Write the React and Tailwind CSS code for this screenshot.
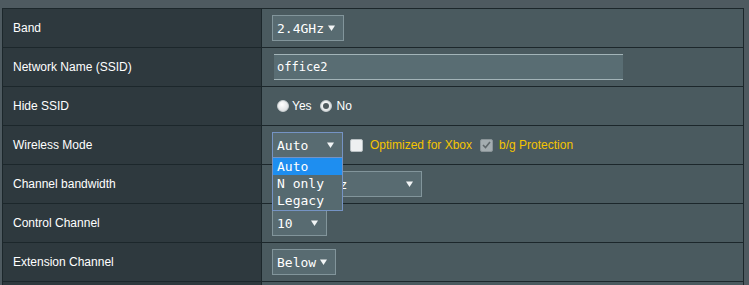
import React from 'react';

const mono = { fontFamily: '"DejaVu Sans Mono", "Liberation Mono", monospace' };

function Arrow() {
    return (
        <svg width="7" height="6" viewBox="0 0 7 6" className="shrink-0">
            <path d="M0 0.5 L7 0.5 L3.5 6 Z" fill="#f2f5f6" />
        </svg>
    );
}

function Select({ value, width, className = '', focused = false }) {
    return (
        <div
            className={`flex h-[26px] items-center justify-between border bg-[#586b71] pl-[4px] pr-[8px] text-[13px] text-white ${focused ? 'border-[#7593c4]' : 'border-[#82959b]'} ${className}`}
            style={{ ...mono, width }}
        >
            <span className="leading-none">{value}</span>
            <Arrow />
        </div>
    );
}

function Radio({ checked }) {
    return (
        <span className="flex h-[12px] w-[12px] items-center justify-center rounded-full border border-[#c9cfd1] bg-[radial-gradient(circle_at_40%_35%,#ffffff,#d4d8da)]">
            {checked && <span className="h-[6px] w-[6px] rounded-full bg-[#4f5a5e]" />}
        </span>
    );
}

function Checkbox({ checked, disabled }) {
    return (
        <span
            className={`flex h-[13px] w-[13px] items-center justify-center rounded-[2px] border ${disabled ? 'border-[#8a9498] bg-[#a4adb0]' : 'border-[#b8c0c3] bg-[#eef0f1]'}`}
        >
            {checked && (
                <svg width="9" height="8" viewBox="0 0 9 8">
                    <path d="M1 4 L3.5 6.5 L8 1" stroke="#5f686b" strokeWidth="1.6" fill="none" />
                </svg>
            )}
        </span>
    );
}

function Row({ label, children, last }) {
    return (
        <div className={`flex h-[39px] border-t border-[#1c272b] ${last ? 'h-[5px]' : ''}`}>
            <div className="flex w-[259px] shrink-0 items-center border-r border-[#1c272b] bg-[#2e393e] pl-[10px] text-[12px] text-white">
                {label}
            </div>
            <div className="relative flex flex-1 items-center bg-[#4a5a5f] pl-[10px]">{children}</div>
        </div>
    );
}

export default function App() {
    return (
        <div
            className="h-[285px] w-[749px] overflow-hidden bg-[#4e5a60] pl-[2px] pt-[8px]"
            style={{ fontFamily: '"Liberation Sans", Arial, sans-serif' }}
        >
            <div className="w-[742px] border-x border-[#1c272b]">
                <Row label="Band">
                    <Select value="2.4GHz" width={72} />
                </Row>
                <Row label="Network Name (SSID)">
                    <div
                        className="ml-[2px] flex h-[26px] w-[349px] items-center border-y border-[#a3b4b8] bg-[#596d73] pl-[3px] text-[12px] text-white"
                        style={mono}
                    >
                        office2
                    </div>
                </Row>
                <Row label="Hide SSID">
                    <div className="flex items-center pl-[5px] text-[12px] text-white">
                        <Radio />
                        <span className="ml-[3px]">Yes</span>
                        <span className="ml-[8px]">
                            <Radio checked />
                        </span>
                        <span className="ml-[5px]">No</span>
                    </div>
                </Row>
                <Row label="Wireless Mode">
                    <div className="flex items-center">
                        <div className="relative">
                            <Select value="Auto" width={71} focused />
                            <div
                                className="absolute left-0 top-[25px] z-10 w-[71px] border border-[#7593c4] bg-[#566a70] text-[13px] text-white"
                                style={mono}
                            >
                                <div className="h-[17px] bg-[#1e8ef0] pl-[4px] leading-[17px]">Auto</div>
                                <div className="h-[17px] pl-[4px] leading-[17px]">N only</div>
                                <div className="h-[18px] pl-[4px] leading-[17px]">Legacy</div>
                            </div>
                        </div>
                        <span className="ml-[7px]">
                            <Checkbox />
                        </span>
                        <span className="ml-[7px] text-[12px] text-[#f5c400]">Optimized for Xbox</span>
                        <span className="ml-[8px]">
                            <Checkbox checked disabled />
                        </span>
                        <span className="ml-[6px] text-[12px] text-[#f5c400]">b/g Protection</span>
                    </div>
                </Row>
                <Row label="Channel bandwidth">
                    <Select value="20/40 MHz" width={150} />
                </Row>
                <Row label="Control Channel">
                    <Select value="10" width={55} />
                </Row>
                <Row label="Extension Channel">
                    <Select value="Below" width={64} />
                </Row>
                <Row label="" last />
            </div>
        </div>
    );
}
